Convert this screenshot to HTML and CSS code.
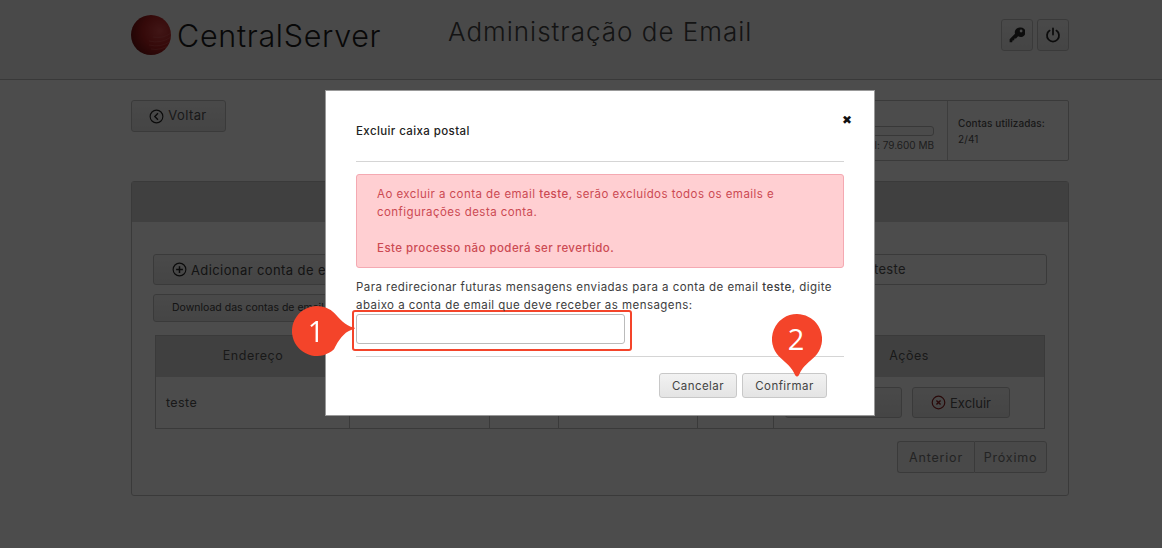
FILE: index.html
```html
<!DOCTYPE html>
<html lang="pt-BR">
<head>
<meta charset="utf-8">
<title>Administração de Email</title>
<link rel="stylesheet" href="styles.css">
</head>
<body>
<header class="top">
  <div class="wrap top-row">
    <div class="brand">
      <svg class="logo" viewBox="0 0 40 40" width="40" height="40">
        <defs>
          <radialGradient id="ball" cx="0.72" cy="0.4" r="0.85">
            <stop offset="0" stop-color="#d94a4a"/>
            <stop offset="0.5" stop-color="#b02020"/>
            <stop offset="1" stop-color="#5a0b0b"/>
          </radialGradient>
          <clipPath id="ballclip"><circle cx="20" cy="20" r="20"/></clipPath>
        </defs>
        <circle cx="20" cy="20" r="20" fill="url(#ball)"/>
        <g clip-path="url(#ballclip)" fill="none" stroke="#e07070" stroke-width=".8" opacity=".45">
          <path d="M18 26q12 3 22-4M18 30q12 3 22-4M20 34q10 2 20-5M22 22q10 2 18-4"/>
        </g>
      </svg>
      <span class="brand-name">CentralServer</span>
    </div>
    <h1 class="page-title">Administração de Email</h1>
    <div class="top-actions">
      <button class="btn icon-btn" aria-label="Senha">
        <svg viewBox="0 0 16 16" width="16" height="16"><path fill="#2b2b2b" d="M10.6 0.6a4.8 4.8 0 0 0-4.6 6.2L0.6 12.2v3h2.6l.3-1.7 1.7-.3.2-1.6 1.6-.2 2.1-2.1A4.8 4.8 0 1 0 10.6.6zm1.5 2a1.4 1.4 0 1 1 0 2.8 1.4 1.4 0 0 1 0-2.8z"/></svg>
      </button>
      <button class="btn icon-btn" aria-label="Sair">
        <svg viewBox="0 0 16 16" width="16" height="16" fill="none" stroke="#2b2b2b" stroke-width="1.8" stroke-linecap="round"><path d="M8 1.500v6"/><path d="M4.600 3.600a6 6 0 1 0 6.800 0"/></svg>
      </button>
    </div>
  </div>
</header>

<main class="wrap">
  <div class="toolbar">
    <button class="btn back">
      <svg viewBox="0 0 16 16" width="15" height="15" fill="none" stroke="#222" stroke-width="1.2"><circle cx="8" cy="8" r="6.8"/><path d="M9.6 4.6 6.2 8l3.4 3.4" stroke-width="1.5"/></svg>
      <span class="back-label">Voltar</span>
    </button>
    <div class="stats">
      <div class="stat-space">
        <div class="bar"></div>
        <div class="stat-text">Espaço disponível: 79.600 MB</div>
      </div>
      <div class="stat-accounts">
        <div>Contas utilizadas:</div>
        <div>2/41</div>
      </div>
    </div>
  </div>

  <section class="panel">
    <div class="panel-head"></div>
    <div class="panel-body">
      <div class="tools">
        <div class="tools-left">
          <button class="btn add">
            <svg viewBox="0 0 16 16" width="15" height="15" fill="none" stroke="#222" stroke-width="1.2"><circle cx="8" cy="8" r="6.8"/><path d="M8 4.4v7.2M4.4 8h7.2" stroke-width="1.6"/></svg>
            Adicionar conta de email
          </button>
          <button class="btn download">Download das contas de email</button>
        </div>
        <div class="search">teste</div>
      </div>

      <div class="table">
        <div class="row head">
          <div class="cell">Endereço</div>
          <div class="cell"></div>
          <div class="cell"></div>
          <div class="cell"></div>
          <div class="cell"></div>
          <div class="cell">Ações</div>
        </div>
        <div class="row body-row">
          <div class="cell left">teste</div>
          <div class="cell"></div>
          <div class="cell"></div>
          <div class="cell"></div>
          <div class="cell"></div>
          <div class="cell actions">
            <button class="btn row-btn edit">Editar</button>
            <button class="btn row-btn remove">
              <svg viewBox="0 0 16 16" width="15" height="15" fill="none" stroke="#8a1f1f" stroke-width="1.3"><circle cx="8" cy="8" r="6.7"/><path d="M5.8 5.8l4.4 4.4M10.2 5.8l-4.4 4.4" stroke-width="1.5"/></svg>
              Excluir
            </button>
          </div>
        </div>
      </div>

      <div class="pager">
        <button class="btn">Anterior</button>
        <button class="btn">Próximo</button>
      </div>
    </div>
  </section>
</main>

<div class="backdrop"></div>

<div class="modal">
  <div class="modal-head">
    <h2 class="modal-title">Excluir caixa postal</h2>
    <span class="close">&#10006;</span>
  </div>
  <div class="alert">
    <p>Ao excluir a conta de email <strong>teste</strong>, serão excluídos todos os emails e configurações desta conta.</p>
    <p class="alert-last"><strong>Este processo não poderá ser revertido.</strong></p>
  </div>
  <p class="hint">Para redirecionar futuras mensagens enviadas para a conta de email <strong>teste</strong>, digite abaixo a conta de email que deve receber as mensagens:</p>
  <div class="field-mark"><input class="field" type="text"></div>
  <div class="modal-foot">
    <button class="mbtn cancel">Cancelar</button>
    <button class="mbtn confirm">Confirmar</button>
  </div>
</div>

<div class="pin pin-one">
  <svg viewBox="0 0 63 50" width="63" height="50"><path fill="#f4442a" d="M25 0a25 25 0 0 1 17 6.700C47 12 53 20 62 21.500q1.500.5 0 1.500C53 25 47 33 42 43.300A25 25 0 1 1 25 0z"/></svg>
  <span class="pin-num">1</span>
</div>
<div class="pin pin-two">
  <svg viewBox="0 0 50 63" width="50" height="63"><path fill="#f4442a" d="M25 0a25 25 0 0 1 17.700 42.700C36 49 30 53 27 61q-2 3-4 0C20 53 14 49 7.300 42.700A25 25 0 0 1 25 0z"/></svg>
  <span class="pin-num">2</span>
</div>
</body>
</html>
```
FILE: styles.css
```css
* { box-sizing: border-box; }
html, body { margin: 0; padding: 0; }
body {
  width: 1162px;
  height: 548px;
  overflow: hidden;
  background: #fff;
  color: #333;
  font-family: Inter, "Open Sans", sans-serif;
  font-size: 12px;
}
.wrap { width: 938px; margin-left: 131px; }
.top { height: 80px; border-bottom: 1px solid #c0c0c0; background: #f4f4f4; }
.top-row { display: flex; align-items: flex-start; height: 79px; }
.brand { display: flex; align-items: center; gap: 6px; padding-top: 15px; width: 317px; }
.logo { display: block; }
.brand-name { font-size: 30.500px; font-weight: 300; color: #1d1d1d; letter-spacing: .7px; }
.page-title { margin: 14px 0 0; font-size: 26px; font-weight: 300; color: #444; letter-spacing: 1px; line-height: 36px; flex: 1; }
.top-actions { display: flex; gap: 4px; padding-top: 19px; }
.btn {
  display: inline-flex;
  align-items: center;
  justify-content: center;
  gap: 4px;
  border: 1px solid #c4c4c4;
  border-radius: 3px;
  background: linear-gradient(#f6f6f6, #e6e6e6);
  color: #444;
  font: inherit;
  padding: 0;
}
.icon-btn { width: 32px; height: 32px; }
.toolbar { display: flex; justify-content: space-between; padding-top: 20px; height: 101px; }
.back { width: 95px; height: 32px; font-size: 13px; color: #555; letter-spacing: .4px; padding-right: 1px; }
.back-label { position: relative; top: -1px; }
.stats { display: flex; width: 300px; height: 61px; border: 1px solid #c4c4c4; border-radius: 2px; }
.stat-space { width: 178px; padding: 25px 13px 0 0; border-right: 1px solid #ccc; display: flex; flex-direction: column; align-items: flex-end; }
.bar { width: 100%; height: 10px; border: 1px solid #bbb; border-radius: 3px; background: #fafafa; }
.stat-text { margin-top: 3px; font-size: 10px; color: #666; white-space: nowrap; }
.stat-accounts { padding: 14px 0 0 10px; font-size: 10px; line-height: 16px; color: #555; font-weight: 500; letter-spacing: .1px; }
.stat-accounts div + div { font-weight: 400; }
.panel { height: 315px; border: 1px solid #c4c4c4; border-radius: 3px; background: #fff; }
.panel-head { height: 40px; background: #d8d8d8; }
.panel-body { padding: 32px 21px 0; }
.tools { display: flex; justify-content: space-between; height: 81px; }
.tools-left { display: flex; flex-direction: column; gap: 9px; width: 260px; }
.add { height: 31px; width: 260px; justify-content: flex-start; padding-left: 18px; font-size: 13px; letter-spacing: .4px; white-space: nowrap; }
.download { height: 28px; width: 260px; justify-content: flex-start; padding: 0 0 1px 18px; font-size: 10.500px; white-space: nowrap; }
.search { width: 320px; height: 31px; border: 1px solid #c4c4c4; border-radius: 3px; background: #fff; color: #555; font-size: 13px; line-height: 29px; padding-left: 146px; letter-spacing: .3px; }
.table { width: 890px; margin-left: 2px; border: 1px solid #c4c4c4; }
.row { display: grid; grid-template-columns: 194px 140px 69px 139px 76px 1fr; }
.head { height: 41px; background: #d8d8d8; font-size: 12.500px; color: #555; letter-spacing: .5px; }
.head .cell { display: flex; align-items: center; justify-content: center; padding-bottom: 2px; }
.body-row { height: 51px; font-size: 12.500px; color: #555; letter-spacing: .4px; }
.body-row .cell { border-right: 1px solid #c4c4c4; }
.body-row .cell:last-child { border-right: 0; }
.left { padding: 18px 0 0 10px; }
.actions { display: flex; gap: 10px; padding: 10px 0 0 11px; }
.row-btn { height: 31px; font-size: 13px; color: #555; }
.edit { width: 117px; }
.remove { width: 98px; }
.pager { display: flex; justify-content: flex-end; margin-top: 12px; }
.pager .btn { height: 32px; font-size: 12.500px; color: #777; background: #f3f3f3; letter-spacing: .8px; }
.pager .btn:first-child { width: 77px; border-radius: 3px 0 0 3px; border-right: 0; }
.pager .btn:last-child { width: 73px; border-radius: 0 3px 3px 0; }
.backdrop { position: fixed; inset: 0; background: rgba(0, 0, 0, .7); }
.modal {
  position: absolute;
  left: 325px;
  top: 90px;
  width: 550px;
  height: 326px;
  padding: 0 30px;
  background: #fff;
  border: 1px solid #999;
  color: #333;
  font-size: 11.500px;
  letter-spacing: .45px;
}
.modal-head { position: relative; height: 71px; border-bottom: 1px solid #d5d5d5; }
.modal-title { margin: 0; padding-top: 33px; font-size: 11.500px; line-height: 14px; font-weight: 500; color: #222; letter-spacing: .4px; }
.close { position: absolute; right: -8px; top: 21px; font-size: 12px; line-height: 16px; color: #111; }
.alert { margin-top: 12px; height: 94px; padding: 9.600px 20px; background: #ffcfd2; border: 1px solid #f4a9b2; border-radius: 3px; color: #cc4a52; line-height: 18.500px; }
.alert p { margin: 0; }
.alert-last { margin-top: 17px !important; }
.alert strong, .hint strong { font-weight: 500; }
.hint { margin: 9.500px 0 0; line-height: 18px; color: #3d3d3d; }
.field-mark { width: 280px; height: 41px; margin: -3.500px 0 0 -4px; padding: 2px; border: 2px solid #f4442a; border-radius: 3px; }
.field { display: block; width: 269px; height: 30px; margin: 0; border: 1px solid #bbb; border-radius: 3px; background: #fff; outline: 0; }
.modal-foot { display: flex; justify-content: flex-end; gap: 5px; margin-top: 5px; padding: 16px 17px 0 0; border-top: 1px solid #d5d5d5; }
.mbtn { height: 25px; border: 1px solid #c8c8c8; border-radius: 3px; background: linear-gradient(#f2f2f2, #e4e4e4); color: #444; font: inherit; font-size: 11.500px; letter-spacing: .45px; padding: 0; }
.cancel { width: 78px; }
.confirm { width: 85px; }
.pin { position: absolute; color: #fff; }
.pin svg { display: block; }
.pin-one { left: 292px; top: 306px; }
.pin-two { left: 772px; top: 314px; }
.pin-num { position: absolute; font-family: "Open Sans", sans-serif; font-size: 29px; font-weight: 500; line-height: 50px; width: 50px; left: -1px; top: 0; text-align: center; }
```
